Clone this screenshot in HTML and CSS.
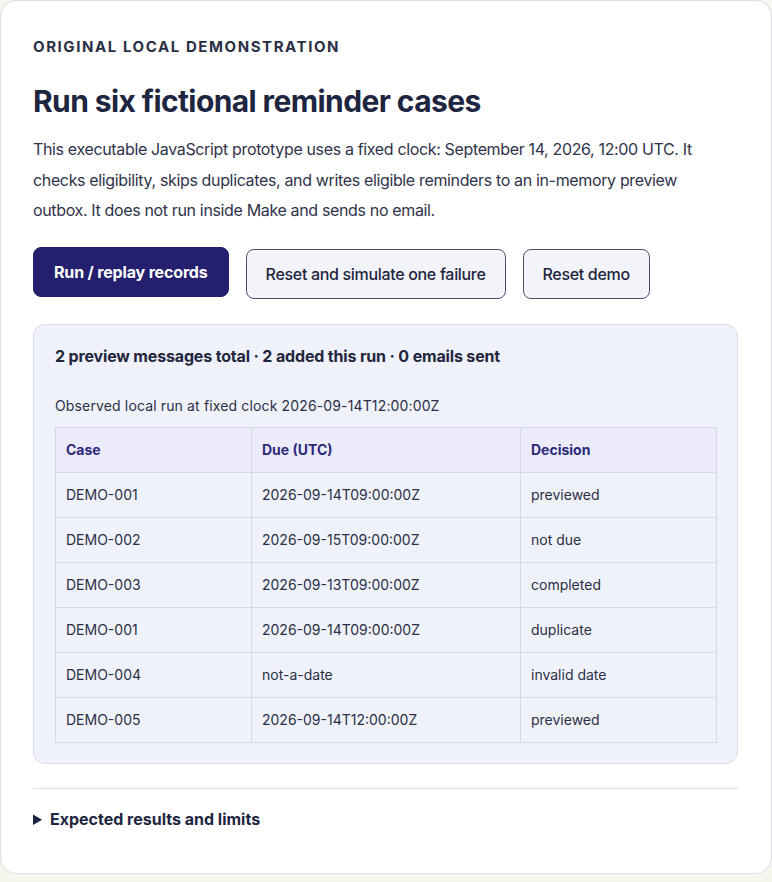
FILE: index.html
```html
<!DOCTYPE html>
<html lang="en">
<head>
<meta charset="utf-8">
<title>Run six fictional reminder cases</title>
<link rel="stylesheet" href="styles.css">
</head>
<body>
<section class="card">
  <p class="eyebrow">ORIGINAL LOCAL DEMONSTRATION</p>
  <h1 class="title">Run six fictional reminder cases</h1>
  <p class="lead">This executable JavaScript prototype uses a fixed clock: September 14, 2026, 12:00 UTC. It checks eligibility, skips duplicates, and writes eligible reminders to an in-memory preview outbox. It does not run inside Make and sends no email.</p>
  <div class="actions">
    <button class="btn btn-primary" type="button">Run / replay records</button>
    <button class="btn btn-secondary" type="button">Reset and simulate one failure</button>
    <button class="btn btn-secondary" type="button">Reset demo</button>
  </div>
  <div class="panel">
    <p class="summary">2 preview messages total · 2 added this run · 0 emails sent</p>
    <p class="observed">Observed local run at fixed clock 2026-09-14T12:00:00Z</p>
    <table class="results">
      <colgroup>
        <col class="col-case">
        <col class="col-due">
        <col class="col-decision">
      </colgroup>
      <thead>
        <tr><th>Case</th><th>Due (UTC)</th><th>Decision</th></tr>
      </thead>
      <tbody>
        <tr><td>DEMO-001</td><td>2026-09-14T09:00:00Z</td><td>previewed</td></tr>
        <tr><td>DEMO-002</td><td>2026-09-15T09:00:00Z</td><td>not due</td></tr>
        <tr><td>DEMO-003</td><td>2026-09-13T09:00:00Z</td><td>completed</td></tr>
        <tr><td>DEMO-001</td><td>2026-09-14T09:00:00Z</td><td>duplicate</td></tr>
        <tr><td>DEMO-004</td><td>not-a-date</td><td>invalid date</td></tr>
        <tr><td>DEMO-005</td><td>2026-09-14T12:00:00Z</td><td>previewed</td></tr>
      </tbody>
    </table>
  </div>
  <hr class="divider">
  <details class="more">
    <summary>Expected results and limits</summary>
  </details>
</section>
</body>
</html>
```

FILE: styles.css
```css
* { box-sizing: border-box; }

body {
  margin: 0;
  background: #f6f6ee;
  font-family: Inter, "Noto Sans", "Liberation Sans", sans-serif;
  color: #2b2f45;
}

.card {
  width: 772px;
  background: #ffffff;
  border: 1px solid #dcdee9;
  border-radius: 16px;
  padding: 36px 33px 42px 32px;
}

.eyebrow {
  margin: 0;
  font-size: 15px;
  line-height: 20px;
  font-weight: 700;
  letter-spacing: 0.105em;
  color: #2b2f45;
}

.title {
  margin: 26px 0 0;
  font-size: 30px;
  line-height: 36px;
  font-weight: 700;
  letter-spacing: -0.02em;
  color: #1e2540;
}

.lead {
  margin: 15px 0 0;
  max-width: 690px;
  font-size: 16px;
  line-height: 30.5px;
  letter-spacing: -0.022em;
  color: #2f334a;
}

.actions {
  display: flex;
  align-items: flex-start;
  gap: 17px;
  margin-top: 22px;
}

.btn {
  height: 50px;
  border-radius: 8px;
  font-family: inherit;
  font-size: 16px;
  line-height: 20px;
  cursor: pointer;
}

.btn-primary {
  padding: 0 20px;
  background: #241f6e;
  border: 1px solid #241f6e;
  color: #ffffff;
  font-weight: 700;
  letter-spacing: -0.01em;
  transform: translateY(-1px);
}

.btn-secondary {
  padding: 0 19px;
  margin-top: 1px;
  background: #f3f4fa;
  border: 1px solid #4b5068;
  color: #1e2540;
  font-weight: 500;
  letter-spacing: -0.02em;
}

.panel {
  margin-top: 25px;
  background: #eff2fa;
  border: 1px solid #d9dcea;
  border-radius: 12px;
  padding: 19px 21px 20px 21px;
}

.summary {
  margin: 0;
  font-size: 16px;
  line-height: 24px;
  font-weight: 700;
  letter-spacing: -0.01em;
  color: #22263d;
}

.observed {
  margin: 28px 0 0;
  font-size: 14px;
  line-height: 20px;
  letter-spacing: 0.01em;
  color: #2b2f45;
}

.results {
  margin-top: 11px;
  width: 100%;
  border-collapse: collapse;
  table-layout: fixed;
  font-size: 14px;
  line-height: 20px;
}

.col-case { width: 196px; }
.col-due { width: 269px; }
.col-decision { width: 196px; }

.results th,
.results td {
  border: 1px solid #d5d8e8;
  padding: 12px 10px;
  text-align: left;
  height: 45px;
}

.results th {
  background: #ebebfb;
  color: #2e2a7a;
  font-weight: 700;
}

.results tbody td {
  height: 45px;
  padding: 0 10px;
  color: #2b2f45;
  font-weight: 400;
}

.divider {
  margin: 24px 0 0;
  border: 0;
  border-top: 1px solid #dcdee9;
}

.more {
  margin-top: 18px;
}

.more summary {
  font-size: 16px;
  line-height: 24px;
  font-weight: 700;
  color: #1e2540;
  cursor: pointer;
}
```
